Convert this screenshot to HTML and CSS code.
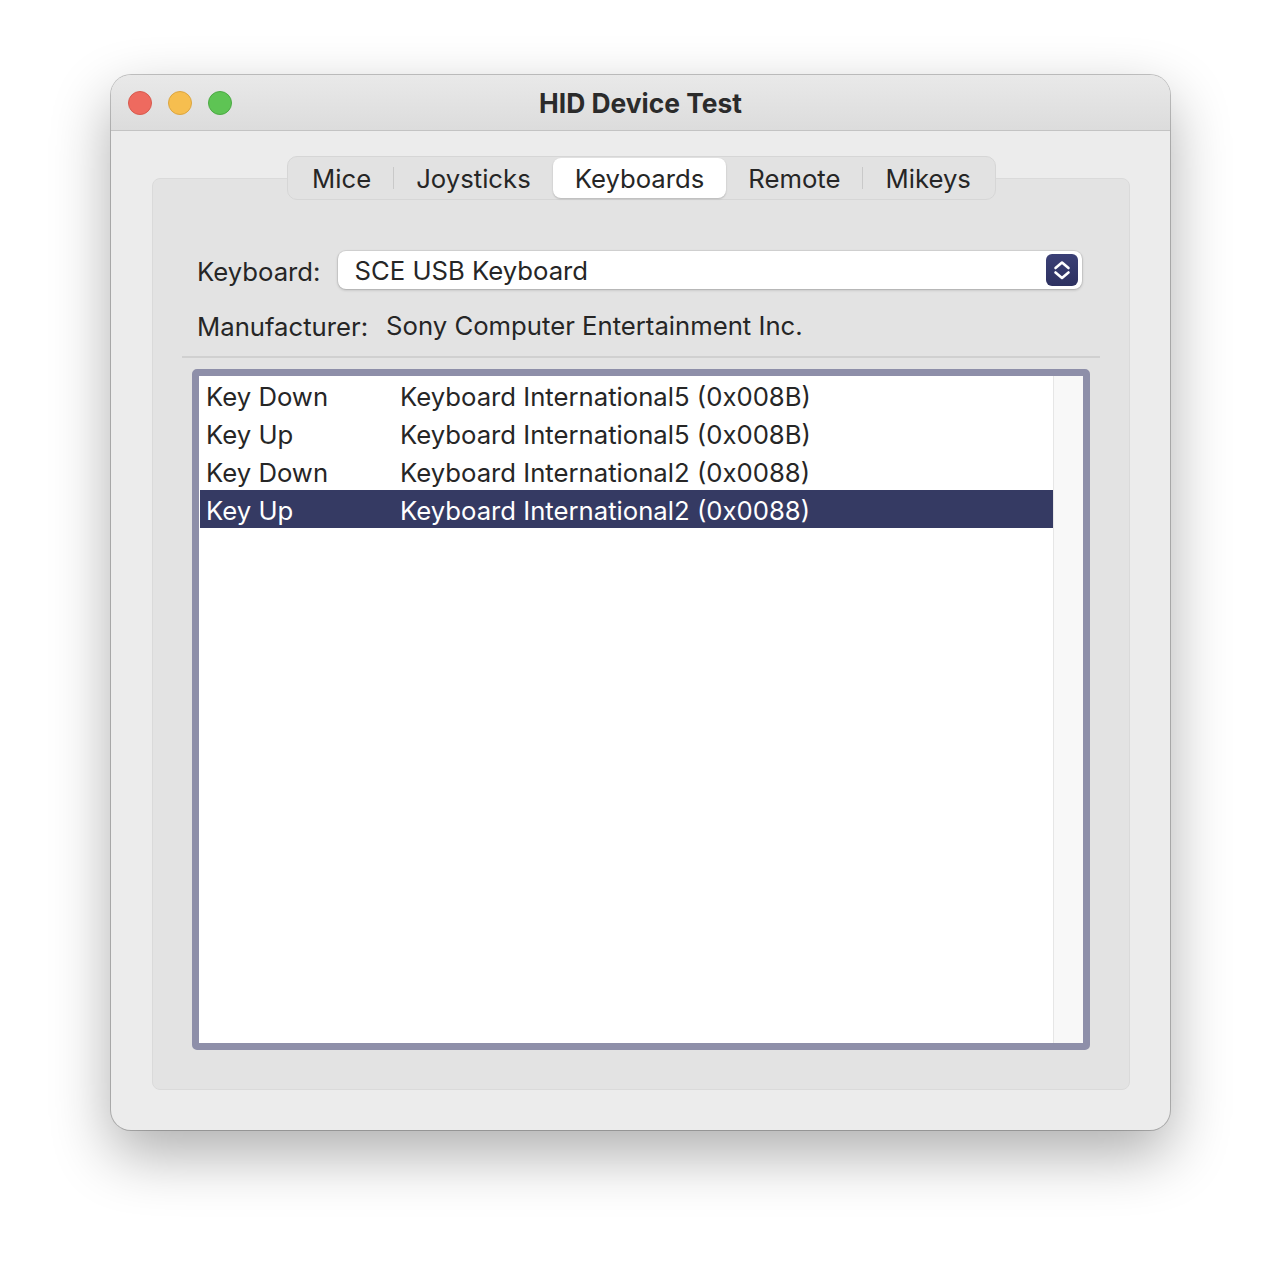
FILE: index.html
```html
<!DOCTYPE html>
<html lang="en">

<head>
  <meta charset="UTF-8">
  <link rel="stylesheet" href="styles.css">
</head>

<body>
  <div class="window">
    <div class="titlebar">
      <div class="lights">
        <span class="light red"></span>
        <span class="light yellow"></span>
        <span class="light green"></span>
      </div>
      <div class="title">HID Device Test</div>
    </div>

    <div class="content">
      <div class="tabs">
        <div class="tab">Mice</div>
        <div class="sep"></div>
        <div class="tab">Joysticks</div>
        <div class="tab selected">Keyboards</div>
        <div class="tab">Remote</div>
        <div class="sep"></div>
        <div class="tab">Mikeys</div>
      </div>

      <div class="box">
        <div class="form-row">
          <div class="label">Keyboard:</div>
          <div class="popup">
            <span>SCE USB Keyboard</span>
            <span class="stepper">
              <svg width="32" height="32" viewBox="0 0 32 32">
                <path d="M9.5 14 L16 8.5 L22.5 14" fill="none" stroke="#fff" stroke-width="2.6" stroke-linecap="round" stroke-linejoin="round"/>
                <path d="M9.5 18.5 L16 24 L22.5 18.5" fill="none" stroke="#fff" stroke-width="2.6" stroke-linecap="round" stroke-linejoin="round"/>
              </svg>
            </span>
          </div>
        </div>
        <div class="form-row info">
          <div class="label">Manufacturer:</div>
          <div class="value">Sony Computer Entertainment Inc.</div>
        </div>

        <div class="divider"></div>

        <div class="table">
          <div class="rows">
            <div class="row"><span class="c1">Key Down</span><span>Keyboard International5 (0x008B)</span></div>
            <div class="row"><span class="c1">Key Up</span><span>Keyboard International5 (0x008B)</span></div>
            <div class="row"><span class="c1">Key Down</span><span>Keyboard International2 (0x0088)</span></div>
            <div class="row active"><span class="c1">Key Up</span><span>Keyboard International2 (0x0088)</span></div>
          </div>
          <div class="scroller"></div>
        </div>
      </div>
    </div>
  </div>
</body>

</html>
```

FILE: styles.css
```css
html {
  background-color: #fff;
}

body {
  margin: 0;
  padding: 75px 0 148px 111px;
  font-family: Inter, "Liberation Sans", sans-serif;
  color: #262626;
}

.window {
  width: 1059px;
  height: 1055px;
  border-radius: 20px;
  background-color: #ececec;
  box-shadow: 0 0 0 1px rgba(0, 0, 0, 0.22), 0 24px 60px rgba(0, 0, 0, 0.32);
  display: flex;
  flex-direction: column;
  overflow: hidden;
}

.titlebar {
  height: 55px;
  flex-shrink: 0;
  background: linear-gradient(#e9e9e9, #dcdcdc);
  border-bottom: 1px solid #c3c3c3;
  display: flex;
  align-items: center;
  position: relative;
}

.lights {
  display: flex;
  gap: 16px;
  padding-left: 17px;
}

.light {
  width: 24px;
  height: 24px;
  border-radius: 50%;
  box-sizing: border-box;
}

.red {
  background-color: #ee6a5f;
  border: 1px solid #d75a4e;
}

.yellow {
  background-color: #f6be4f;
  border: 1px solid #dba540;
}

.green {
  background-color: #5ec454;
  border: 1px solid #4ca944;
}

.title {
  position: absolute;
  left: 0;
  right: 0;
  text-align: center;
  font-weight: 700;
  font-size: 26.4px;
  color: #2b2b2b;
}

.content {
  padding: 25px 40px 40px 41px;
  flex: 1;
  display: flex;
  flex-direction: column;
}

.tabs {
  align-self: center;
  position: relative;
  z-index: 1;
  height: 44px;
  box-sizing: border-box;
  display: flex;
  align-items: center;
  padding: 0 2px;
  background-color: #e2e2e2;
  border: 1px solid #d6d6d6;
  border-radius: 10px;
  margin-left: 1px;
}

.tab {
  height: 40px;
  display: flex;
  align-items: center;
  padding: 0 22px;
  font-size: 25.7px;
  color: #262626;
  border-radius: 8px;
}

.tab.selected {
  background-color: #fff;
  box-shadow: 0 1px 2px rgba(0, 0, 0, 0.2);
}

.sep {
  width: 1px;
  height: 22px;
  background-color: #c9c9c9;
}

.box {
  flex: 1;
  margin-top: -22px;
  padding-top: 72px;
  background-color: #e3e3e3;
  border: 1px solid #dadada;
  border-radius: 8px;
  display: flex;
  flex-direction: column;
}

.form-row {
  display: flex;
  align-items: center;
  gap: 18px;
  padding: 0 47px 0 44px;
  font-size: 25.7px;
}

.form-row .label {
  padding-top: 3px;
}

.info {
  height: 38px;
  margin-top: 17px;
}

.popup {
  flex: 1;
  height: 38px;
  background-color: #fff;
  border-radius: 8px;
  box-shadow: 0 0 0 1px rgba(0, 0, 0, 0.06), 0 1px 3px rgba(0, 0, 0, 0.22);
  display: flex;
  align-items: center;
  justify-content: space-between;
  padding: 0 4px 0 16px;
}

.stepper {
  width: 32px;
  height: 32px;
  border-radius: 6px;
  background: linear-gradient(#3b4076, #2d3160);
  display: flex;
}

.divider {
  height: 2px;
  margin: 12px 29px 0 29px;
  background-color: #d0d0d0;
}

.table {
  flex: 1;
  margin: 11px 39px 39px 39px;
  border: 7px solid #8e8fa9;
  border-radius: 5px;
  background-color: #fff;
  display: flex;
}

.rows {
  flex: 1;
  padding-left: 1px;
  font-size: 25.7px;
}

.row {
  height: 38px;
  box-sizing: border-box;
  display: flex;
  align-items: center;
  padding: 2px 0 0 6px;
  color: #262626;
}

.row .c1 {
  width: 194px;
}

.row.active {
  background-color: #353a63;
  color: #fff;
}

.scroller {
  width: 29px;
  background-color: #f8f8f8;
  border-left: 1px solid #e6e6e6;
}
```
